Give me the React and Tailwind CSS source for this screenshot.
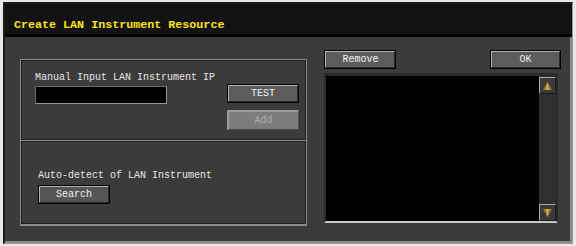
export default function App() {
  const mono = { fontFamily: '"Liberation Mono", "DejaVu Sans Mono", monospace' }

  return (
    <div className="w-[576px] h-[246px] bg-[#e8e8e8] pt-[2px] pl-[3px] pr-[3px] pb-[2px]" style={mono}>
      <div className="w-full h-full bg-[#2a2a2a] border-l-[2px] border-t-[2px] border-[#1c1c1c] border-r-[1px] border-r-[#9a9a9a] border-b-[1px] border-b-[#9a9a9a] flex flex-col">
        {/* title bar */}
        <div className="h-[33px] bg-[#121212] border-b-[3px] border-black flex items-start pl-[9px] pt-[14px]">
          <span className="text-[11.7px] leading-[14px] font-bold text-[#ffe800]">Create LAN Instrument Resource</span>
        </div>

        {/* body */}
        <div className="flex-1 bg-[#3b3b3b] border-r-[2px] border-r-[#8a8a8a] border-b-[2px] border-b-[#8a8a8a] flex pl-[15px] pr-[9px]">
          {/* left group */}
          <div className="w-[288px] mt-[22px] flex flex-col">
            <div className="h-[82px] border border-[#8c8c8c]">
              <div className="h-full border border-[#1e1e1e] pl-[13px] pt-[11px] flex">
                <div className="w-[177px] shrink-0">
                  <div className="text-[10px] leading-[12px] text-[#e6e6e6] whitespace-nowrap">Manual Input LAN Instrument IP</div>
                  <div className="mt-[2px] w-[132px] h-[18px] bg-black border border-[#6a6a6a] border-r-[#9a9a9a] border-b-[#9a9a9a]"></div>
                </div>
                <div className="ml-[15px] mt-[12px] flex flex-col gap-[7px]">
                  <div className="w-[72px] h-[19px] border border-black">
                    <div className="h-full bg-[#5c5c5c] border-t border-l border-[#b4b4b4] border-r border-b border-r-[#2a2a2a] border-b-[#2a2a2a] flex items-center justify-center text-[10px] text-[#f2f2f2]">TEST</div>
                  </div>
                  <div className="w-[72px] h-[20px] bg-[#7c7c7c] border-t-2 border-l-2 border-[#9c9c9c] border-r border-b border-r-[#4a4a4a] border-b-[#4a4a4a] flex items-center justify-center text-[10px] text-[#b0b0b0]">Add</div>
                </div>
              </div>
            </div>
            <div className="h-[85px] border border-[#8c8c8c] border-t-0 border-b-2">
              <div className="h-full border border-[#1e1e1e] pl-[16px] pt-[28px]">
                <div className="text-[10px] leading-[12px] text-[#e6e6e6]">Auto-detect of LAN Instrument</div>
                <div className="mt-[3px] w-[72px] h-[19px] border border-black">
                  <div className="h-full bg-[#555] border-t border-l border-[#b4b4b4] border-r border-b border-r-[#2a2a2a] border-b-[#2a2a2a] flex items-center justify-center text-[10px] text-[#f2f2f2]">Search</div>
                </div>
              </div>
            </div>
          </div>

          {/* right column */}
          <div className="ml-[17px] w-[237px] mt-[13px] flex flex-col">
            <div className="flex justify-between">
              <div className="w-[72px] h-[19px] border border-black">
                <div className="h-full bg-[#5c5c5c] border-t border-l border-[#b4b4b4] border-r border-b border-r-[#2a2a2a] border-b-[#2a2a2a] flex items-center justify-center text-[10px] text-[#f2f2f2]">Remove</div>
              </div>
              <div className="w-[71px] h-[19px] border border-black">
                <div className="h-full bg-[#5c5c5c] border-t border-l border-[#b4b4b4] border-r border-b border-r-[#2a2a2a] border-b-[#2a2a2a] flex items-center justify-center text-[10px] text-[#f2f2f2]">OK</div>
              </div>
            </div>
            <div className="mt-[4px] w-[234px] h-[150px] bg-black border-t-[3px] border-l-[2px] border-[#2a2a2a] border-b-[2px] border-b-[#c8c8c8] border-r-[2px] border-r-[#2a2a2a] flex justify-end">
              <div className="w-[17px] h-full bg-[#2f2f2f] flex flex-col justify-between pt-[1px]">
                <div className="h-[17px] border-t border-l border-[#a8a8a8] border-r border-b border-r-[#1a1a1a] border-b-[#1a1a1a] bg-[#3a3a3a] flex items-center justify-center">
                  <svg width="9" height="8" viewBox="0 0 9 8"><polygon points="4.5,0 9,8 0,8" fill="#a07a28" /><polygon points="4.5,0 6,8 3,8" fill="#d8b050" /></svg>
                </div>
                <div className="h-[17px] border-t border-l border-[#a8a8a8] border-r border-b border-r-[#1a1a1a] border-b-[#1a1a1a] bg-[#3a3a3a] flex items-center justify-center">
                  <svg width="9" height="8" viewBox="0 0 9 8"><polygon points="0,0 9,0 4.5,8" fill="#a07a28" /><polygon points="3,0 6,0 4.5,8" fill="#d8b050" /></svg>
                </div>
              </div>
            </div>
          </div>
        </div>
      </div>
    </div>
  )
}
